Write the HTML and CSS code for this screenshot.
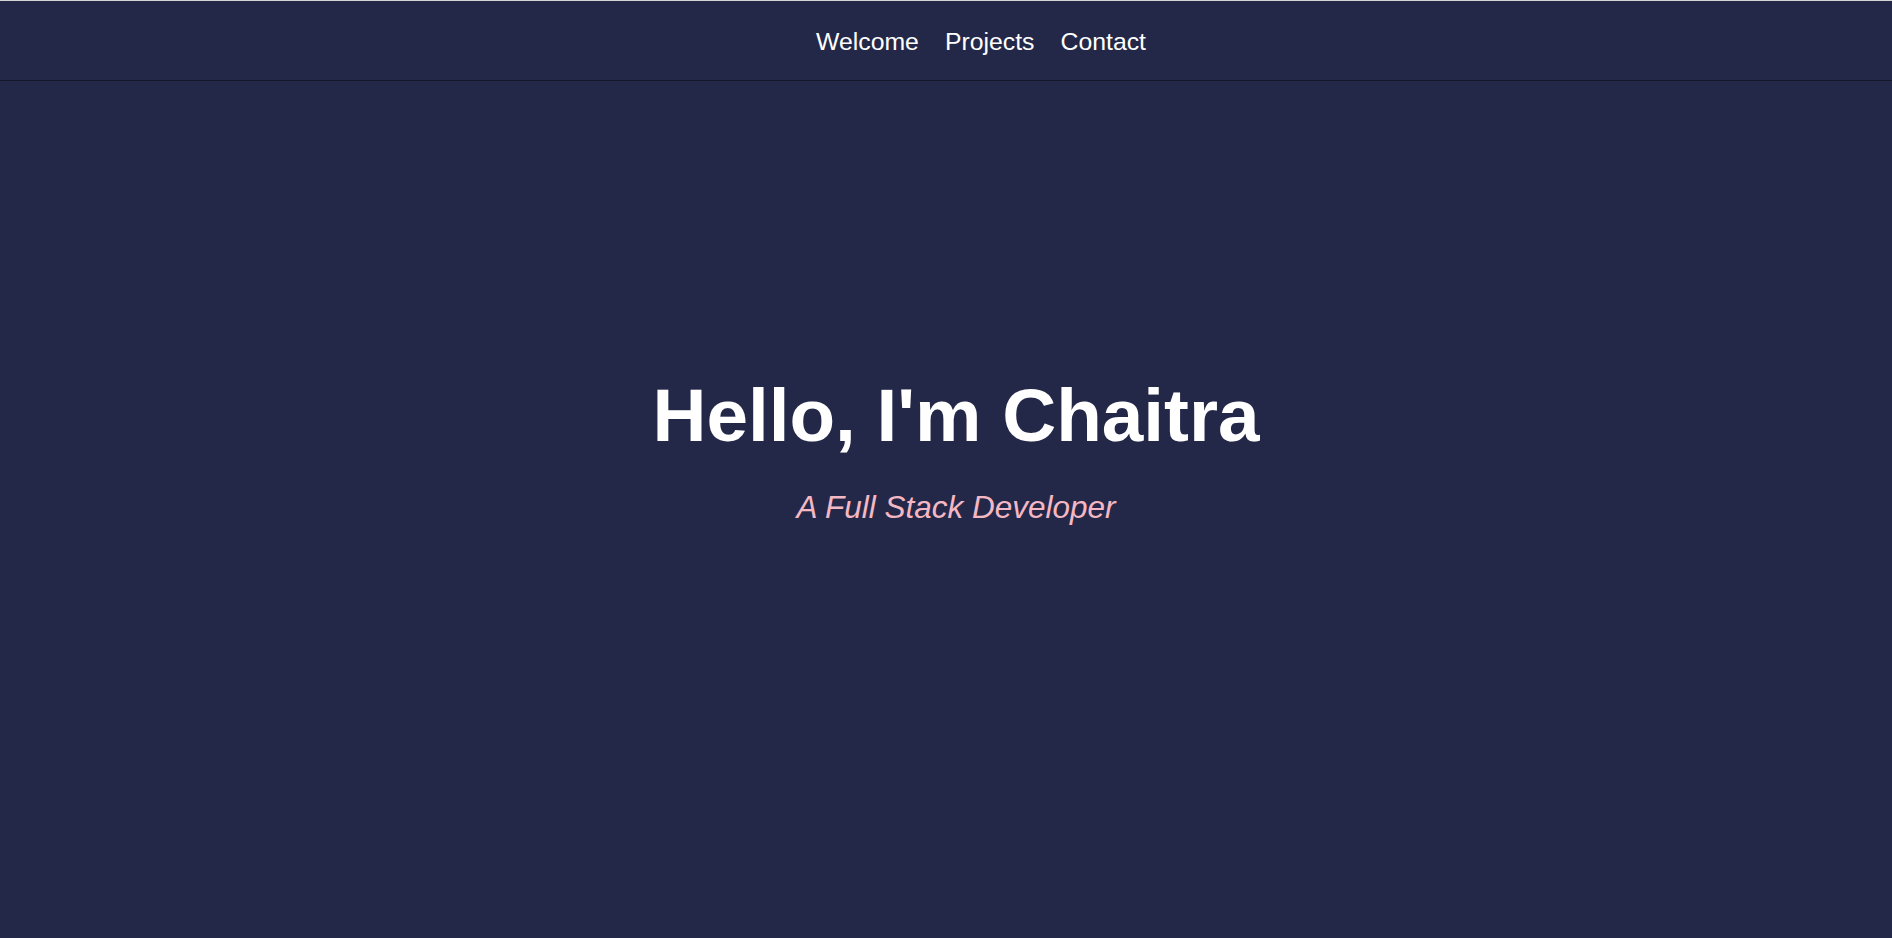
FILE: index.html
```html
<!DOCTYPE html>
<html lang="en">
<head>
<meta charset="utf-8">
<title>Chaitra</title>
<link rel="stylesheet" href="styles.css">
</head>
<body>
<nav class="topnav">
  <ul class="menu">
    <li class="menu-item"><a href="#welcome">Welcome</a></li>
    <li class="menu-item"><a href="#projects">Projects</a></li>
    <li class="menu-item"><a href="#contact">Contact</a></li>
  </ul>
</nav>
<main class="hero" id="welcome">
  <h1 class="hero-title">Hello, I'm Chaitra</h1>
  <p class="hero-subtitle">A Full Stack Developer</p>
</main>
</body>
</html>
```
FILE: styles.css
```css
html, body {
  margin: 0;
  padding: 0;
  background: #242848;
  font-family: "Liberation Sans", Arial, sans-serif;
  color: #ffffff;
}

body {
  min-height: 938px;
  display: flex;
  flex-direction: column;
}

.topnav {
  box-sizing: border-box;
  height: 81px;
  border-top: 1px solid #d4d4d4;
  border-bottom: 1px solid #14162a;
  display: flex;
  align-items: center;
  justify-content: center;
  padding-top: 2px;
}

.menu {
  list-style: none;
  margin: 0;
  padding: 0 0 0 44px;
  display: flex;
}

.menu-item {
  margin-left: 26px;
}

.menu-item a {
  color: #ffffff;
  text-decoration: none;
  font-size: 24.8px;
}

.hero {
  flex: 1;
  display: flex;
  flex-direction: column;
  align-items: center;
  padding: 291px 0 0 20px;
  text-align: center;
}

.hero-title {
  margin: 0;
  font-size: 74.7px;
  font-weight: bold;
  color: #ffffff;
}

.hero-subtitle {
  margin: 31px 0 0 0;
  font-size: 31.5px;
  font-style: italic;
  color: #f4b8c4;
}
```
